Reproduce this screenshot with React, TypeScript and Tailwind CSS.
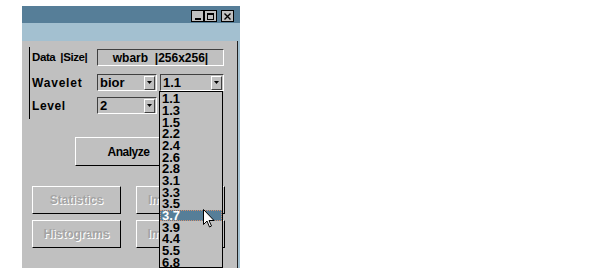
import React from "react";

const WAVELETS = ["1.1", "1.3", "1.5", "2.2", "2.4", "2.6", "2.8", "3.1", "3.3", "3.5", "3.7", "3.9", "4.4", "5.5", "6.8"];

function ArrowButton() {
  return (
    <span className="flex h-[14px] w-[11px] items-center justify-center border border-t-white border-l-white border-b-[#404040] border-r-[#404040] bg-[#c0c0c0]">
      <svg width="5" height="3" viewBox="0 0 5 3"><path d="M0 0h5L2.5 3z" fill="#000" /></svg>
    </span>
  );
}

function Combo({ value, width }: { value: string; width: string }) {
  return (
    <div className={`flex h-[17px] ${width} items-center justify-between border border-t-[#404040] border-l-[#404040] border-b-white border-r-white bg-[#c0c0c0] pl-[2px] pr-[1px]`}>
      <span className="text-[13px] leading-none">{value}</span>
      <ArrowButton />
    </div>
  );
}

function WinButton({ children, className = "" }: { children: React.ReactNode; className?: string }) {
  return (
    <div className={`flex h-[12px] w-[13px] items-center justify-center border border-black bg-[#c0c0c0] ${className}`}>
      {children}
    </div>
  );
}

function DisabledButton({ label }: { label: string }) {
  return (
    <div className="flex h-[28px] w-[89px] items-center justify-center border border-t-white border-l-white border-b-black border-r-black text-[#a4a4a4] [text-shadow:1px_1px_0_#fff]">
      {label}
    </div>
  );
}

export default function App() {
  return (
    <div className="h-[277px] w-[600px] bg-white pt-[6px] pl-[22px] font-['Liberation_Sans',Arial,sans-serif] text-[12px] font-bold text-black">
      <div className="relative w-[218px]">
        <div className="flex h-[17px] items-start justify-end bg-[#567e98] pt-[4px] pr-[6px]">
          <WinButton>
            <span className="mt-[5px] block h-[2px] w-[6px] bg-black" />
          </WinButton>
          <WinButton>
            <span className="block h-[7px] w-[7px] border border-black border-t-2" />
          </WinButton>
          <WinButton className="ml-[4px]">
            <svg width="7" height="7" viewBox="0 0 7 7"><path d="M0.5 0.5l6 6M6.5 0.5l-6 6" stroke="#000" strokeWidth="1.4" /></svg>
          </WinButton>
        </div>
        <div className="h-[18px] bg-[#a3c0d0]" />
        <div className="flex bg-[#a3c0d0] pr-[2px]">
          <div className="h-[227px] flex-1 border-r border-[#202020] bg-[#c0c0c0]">
            <div className="ml-[7px] mt-[6px] h-[72px] border-l border-black pl-[2px] pt-[2px]">
              <div className="flex h-[17px] items-center">
                <span className="w-[65px] whitespace-nowrap text-[11.5px] tracking-[-0.4px]">
                  Data<span className="ml-[5px]">|Size|</span>
                </span>
                <div className="flex h-[17px] w-[127px] items-center justify-center whitespace-pre border border-t-[#404040] border-l-[#404040] border-b-white border-r-white">
                  wbarb  |256x256|
                </div>
              </div>
              <div className="mt-[8px] flex h-[17px] items-center">
                <span className="w-[65px] tracking-[0.8px]">Wavelet</span>
                <Combo value="bior" width="w-[60px]" />
                <div className="ml-[3px]">
                  <Combo value="1.1" width="w-[64px]" />
                </div>
              </div>
              <div className="mt-[6px] flex h-[17px] items-center">
                <span className="w-[65px] tracking-[0.6px]">Level</span>
                <Combo value="2" width="w-[60px]" />
              </div>
            </div>
            <div className="ml-[53px] mt-[18px] flex h-[29px] w-[107px] items-center justify-center border border-t-white border-l-white border-b-black border-r-black tracking-[-0.5px]">
              Analyze
            </div>
            <div className="ml-[10px] mt-[20px] grid w-fit grid-cols-[89px_89px] gap-x-[15px] gap-y-[6px]">
              <DisabledButton label="Statistics" />
              <DisabledButton label="Image View" />
              <DisabledButton label="Histograms" />
              <DisabledButton label="Image Save" />
            </div>
          </div>
        </div>

        <div className="absolute left-[137px] top-[85px] h-[177px] w-[64px] border border-black bg-[#c0c0c0] pt-[1px]">
          {WAVELETS.map((w) => (
            <div
              key={w}
              className={`flex h-[11.67px] items-center pl-[2px] text-[13px] leading-none ${w === "3.7" ? "bg-[#567e98] text-white outline outline-1 outline-dotted outline-[#d09070] -outline-offset-1" : ""}`}
            >
              {w}
            </div>
          ))}
        </div>

        <svg className="absolute left-[181px] top-[203px]" width="12" height="19" viewBox="0 0 12 19">
          <path d="M0.5 0.5v15l3.5-3.5 2.5 6 2-1-2.5-5.5h5z" fill="#fff" stroke="#000" strokeWidth="1" strokeLinejoin="miter" />
        </svg>
      </div>
    </div>
  );
}
